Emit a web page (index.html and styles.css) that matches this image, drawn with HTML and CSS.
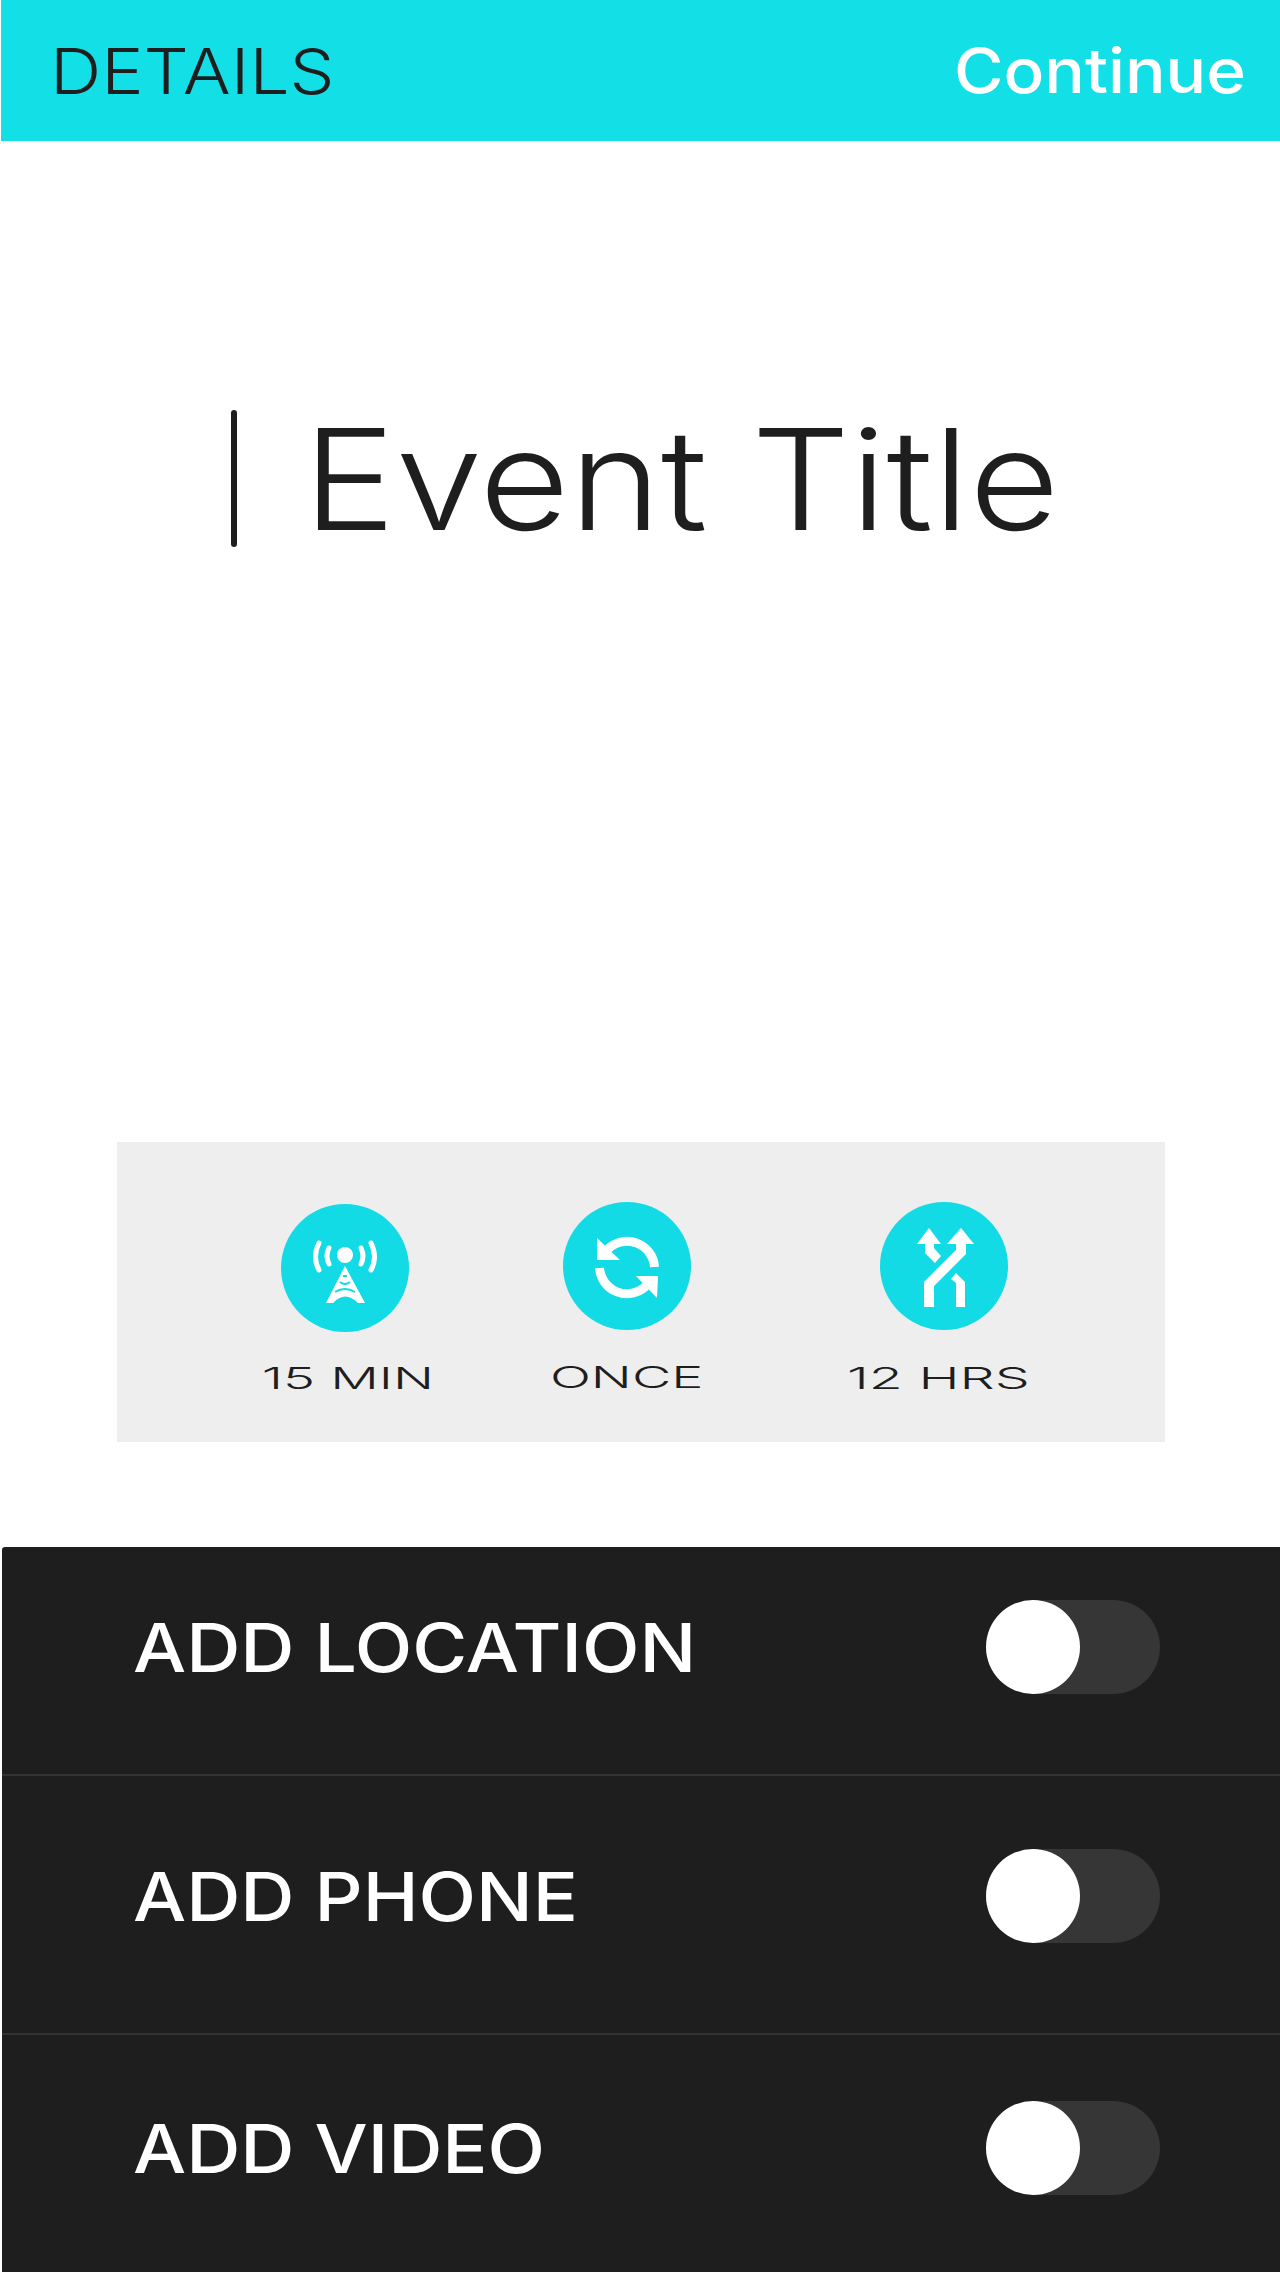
FILE: index.html
```html
<!DOCTYPE html>
<html lang="en">
<head>
  <meta charset="UTF-8">
  <title>Event Details</title>
  <link rel="stylesheet" href="styles.css">
</head>
<body>
  <div class="header">
    <span class="header-title">DETAILS</span>
    <span class="header-action">Continue</span>
  </div>

  <div class="title-area">
    <span class="cursor"></span>
    <h1>Event Title</h1>
  </div>

  <div class="options">
    <div class="option option-min">
      <svg class="option-icon" viewBox="0 0 128 128">
        <circle cx="64" cy="64" r="64" fill="#12dbe6"/>
        <circle cx="64" cy="51" r="8" fill="#fff"/>
        <g fill="none" stroke="#fff" stroke-width="5" stroke-linecap="round">
          <path d="M48 44q-4 8 0 16"/>
          <path d="M80 44q4 8 0 16"/>
          <path d="M38 39q-7 14 0 27"/>
          <path d="M90 39q7 14 0 27"/>
        </g>
        <path d="M64 62L84 99H77Q64 86 52 99H45Z" fill="#fff"/>
        <g fill="none" stroke="#12dbe6" stroke-width="2">
          <path d="M62 72h4"/>
          <path d="M59 78q5 4 10 0"/>
          <path d="M54 88q10-6 20 0"/>
        </g>
      </svg>
      <span class="option-label">15 MIN</span>
    </div>
    <div class="option option-once">
      <svg class="option-icon" viewBox="0 0 128 128">
        <circle cx="64" cy="64" r="64" fill="#12dbe6"/>
        <path d="M45 47A27.5 27.5 0 0 1 91.5 65" fill="none" stroke="#fff" stroke-width="9"/>
        <path d="M36.5 66A27.5 27.5 0 0 0 83 84" fill="none" stroke="#fff" stroke-width="9"/>
        <path d="M34 36V58H57Z" fill="#fff"/>
        <path d="M95 74H73L94 96Z" fill="#fff"/>
      </svg>
      <span class="option-label">ONCE</span>
    </div>
    <div class="option option-hours">
      <svg class="option-icon" viewBox="0 0 128 128">
        <circle cx="64" cy="64" r="64" fill="#12dbe6"/>
        <path d="M49 105V82L81 50V41" fill="none" stroke="#fff" stroke-width="10"/>
        <path d="M81 26L94 42H67Z" fill="#fff"/>
        <path d="M49 26L61 42H37Z" fill="#fff"/>
        <path d="M45 42H54V46L61 54L55 61L45 51Z" fill="#fff"/>
        <path d="M76 71L85 80V105H76V81L71 77Z" fill="#fff"/>
      </svg>
      <span class="option-label">12 HRS</span>
    </div>
  </div>

  <div class="settings">
    <div class="setting setting-location">
      <span class="setting-label">ADD LOCATION</span>
      <span class="toggle"><span class="knob"></span></span>
    </div>
    <div class="setting setting-phone">
      <span class="setting-label">ADD PHONE</span>
      <span class="toggle"><span class="knob"></span></span>
    </div>
    <div class="setting setting-video">
      <span class="setting-label">ADD VIDEO</span>
      <span class="toggle"><span class="knob"></span></span>
    </div>
  </div>
</body>
</html>
```

FILE: styles.css
```css
body {
  font-family: Inter, "Liberation Sans", sans-serif;
  background-color: #fff;
  margin: 0;
  padding: 0;
  height: 2272px;
  overflow: hidden;
}

.header {
  display: flex;
  justify-content: space-between;
  align-items: center;
  height: 141px;
  margin-left: 1px;
  padding: 0 34px 0 49px;
  background-color: #12dfe6;
}

.header-title {
  font-size: 63px;
  font-weight: 300;
  color: #1e1e1e;
  transform: scaleX(1.13);
  transform-origin: left;
}

.header-action {
  font-size: 62px;
  font-weight: 550;
  color: #fff;
  transform: scaleX(1.09);
  transform-origin: right;
}

.title-area {
  display: flex;
  align-items: center;
  gap: 66px;
  height: 135px;
  padding-top: 270px;
  padding-left: 231px;
  margin-bottom: 596px;
}

.cursor {
  width: 6px;
  height: 137px;
  border-radius: 3px;
  background-color: #1e1e1e;
}

h1 {
  margin: 0;
  font-size: 140px;
  font-weight: 300;
  color: #1e1e1e;
  white-space: nowrap;
  transform: scaleX(1.112);
  transform-origin: left;
}

.options {
  display: flex;
  width: 910px;
  height: 300px;
  margin-left: 117px;
  padding-left: 138px;
  background-color: #eee;
}

.option {
  display: flex;
  flex-direction: column;
  align-items: center;
  width: 180px;
  padding-top: 62px;
}

.option-once {
  margin-left: 102px;
  padding-top: 60px;
}

.option-hours {
  margin-left: 137px;
  padding-top: 60px;
}

.option-icon {
  width: 128px;
  height: 128px;
}

.option-label {
  margin-top: 28px;
  font-size: 30px;
  font-weight: 300;
  color: #1e1e1e;
  white-space: nowrap;
  transform: scaleX(1.8);
}

.option-min .option-label {
  margin-left: 6px;
}

.option-once .option-label {
  margin-top: 29px;
}

.option-hours .option-label {
  margin-top: 30px;
  margin-left: -12px;
  transform: scaleX(1.85);
}

.settings {
  height: 725px;
  margin-top: 105px;
  margin-left: 2px;
  background-color: #1e1e1e;
  border-top-left-radius: 3px;
}

.setting {
  display: flex;
  justify-content: space-between;
  align-items: center;
  padding: 53px 120px 80px 131px;
  border-bottom: 2px solid #333;
}

.setting-phone {
  padding-top: 73px;
  padding-bottom: 90px;
}

.setting-video {
  padding-top: 66px;
  border-bottom: none;
}

.setting-label {
  font-size: 67px;
  font-weight: 550;
  color: #fff;
  transform: scaleX(1.12);
  transform-origin: left;
}

.toggle {
  display: block;
  width: 174px;
  height: 94px;
  border-radius: 47px;
  background-color: #363636;
}

.knob {
  display: block;
  width: 94px;
  height: 94px;
  border-radius: 50%;
  background-color: #fff;
}
```
